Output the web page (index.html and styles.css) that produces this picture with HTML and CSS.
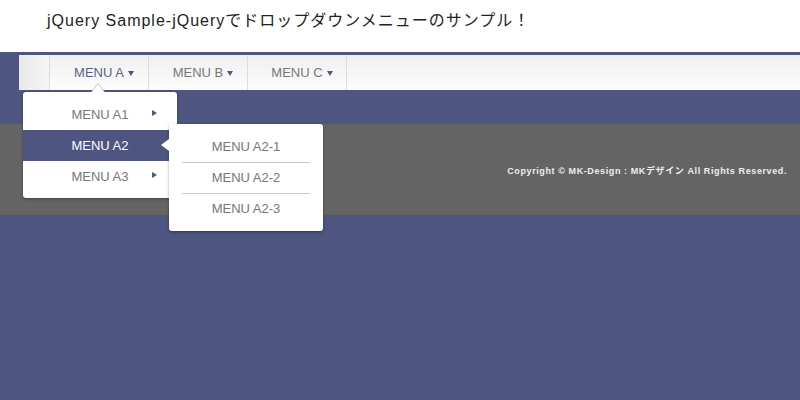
FILE: index.html
```html
<!DOCTYPE html>
<html lang="ja">
<head>
  <meta charset="UTF-8">
  <meta name="viewport" content="width=device-width, initial-scale=1.0">
  <title>jQuery Sample</title>
  <link rel="stylesheet" href="styles.css">
</head>
<body>
  <header class="header">
    <h1>jQuery Sample-jQueryでドロップダウンメニューのサンプル！</h1>
  </header>

  <nav class="nav">
    <ul class="nav-list">
      <li class="nav-blank"></li>
      <li class="nav-item active">
        <a href="#">MENU A<span class="caret"></span></a>
        <ul class="drop">
          <li class="has-sub"><a href="#">MENU A1</a></li>
          <li class="has-sub open">
            <a href="#">MENU A2</a>
            <ul class="sub">
              <li><a href="#">MENU A2-1</a></li>
              <li><a href="#">MENU A2-2</a></li>
              <li><a href="#">MENU A2-3</a></li>
            </ul>
          </li>
          <li class="has-sub"><a href="#">MENU A3</a></li>
        </ul>
      </li>
      <li class="nav-item"><a href="#">MENU B<span class="caret"></span></a></li>
      <li class="nav-item"><a href="#">MENU C<span class="caret"></span></a></li>
    </ul>
  </nav>

  <footer class="footer">
    <p>Copyright © MK-Design : MKデザイン All Rights Reserved.</p>
  </footer>
</body>
</html>
```

FILE: styles.css
```css
html, body {
  min-height: 100%;
  height: 100%;
}
body {
  margin: 0;
  background: #4d5580;
  font-family: "Liberation Sans", Arial, "Noto Sans CJK JP", sans-serif;
}
ul {
  list-style: none;
  margin: 0;
  padding: 0;
}
a {
  text-decoration: none;
}
.header {
  background: #fff;
  height: 52px;
}
.header h1 {
  margin: 0;
  padding: 9px 0 0 47px;
  font-size: 16px;
  font-weight: normal;
  letter-spacing: 1px;
  color: #222;
  line-height: 24px;
}
.nav {
  position: relative;
  z-index: 2;
  padding: 3px 0 34px 19px;
}
.nav-list {
  display: flex;
  height: 35px;
  background: linear-gradient(to bottom, #efefef, #fdfdfd);
}
.nav-blank {
  width: 30px;
  border-right: 1px solid #dcdcdc;
  background: linear-gradient(to right, #e9e9e9, #f6f6f6);
}
.nav-item {
  position: relative;
  width: 98px;
  border-right: 1px solid #dcdcdc;
  text-align: center;
}
.nav-item > a {
  display: block;
  padding-left: 10px;
  line-height: 35px;
  font-size: 13px;
  color: #777;
}
.nav-item.active > a {
  color: #5b6189;
}
.caret {
  display: inline-block;
  width: 0;
  height: 0;
  margin-left: 4px;
  border-left: 3.5px solid transparent;
  border-right: 3.5px solid transparent;
  border-top: 5px solid #4d5580;
  vertical-align: middle;
}
.drop {
  position: absolute;
  left: -27px;
  top: 37px;
  width: 154px;
  padding: 7px 0 6px;
  background: #fff;
  border-radius: 3px;
  box-shadow: 0 1px 3px rgba(0, 0, 0, 0.35);
}
.drop::before {
  content: "";
  position: absolute;
  left: 68px;
  top: -9px;
  border-left: 7px solid transparent;
  border-right: 7px solid transparent;
  border-bottom: 9px solid #bbb;
}
.drop::after {
  content: "";
  position: absolute;
  left: 69px;
  top: -8px;
  border-left: 6px solid transparent;
  border-right: 6px solid transparent;
  border-bottom: 8px solid #fff;
}
.drop > li {
  position: relative;
}
.drop > li > a {
  display: block;
  height: 31px;
  line-height: 31px;
  font-size: 13px;
  color: #777;
}
.has-sub > a::after {
  content: "";
  position: absolute;
  left: 129px;
  top: 11px;
  border-top: 3.5px solid transparent;
  border-bottom: 3.5px solid transparent;
  border-left: 5px solid #4d5580;
}
.drop > li.open > a {
  background: #4d5580;
  color: #fff;
}
.drop > li.open > a::after {
  display: none;
}
.sub {
  position: absolute;
  left: 146px;
  top: -6px;
  width: 128px;
  padding: 7px 13px;
  background: #fff;
  border-radius: 3px;
  box-shadow: 0 1px 3px rgba(0, 0, 0, 0.35);
}
.sub::before {
  content: "";
  position: absolute;
  left: -8px;
  top: 15px;
  border-top: 6px solid transparent;
  border-bottom: 6px solid transparent;
  border-right: 8px solid #fff;
}
.sub li + li {
  border-top: 1px solid #c8c8c8;
}
.sub a {
  display: block;
  line-height: 30px;
  height: 30px;
  font-size: 13px;
  color: #777;
}
.sub li:first-child a {
  height: 31px;
  line-height: 31px;
}
.footer {
  position: relative;
  z-index: 1;
  background: #646464;
  height: 91px;
  display: flex;
  align-items: center;
  justify-content: flex-end;
  padding-right: 13px;
}
.footer p {
  margin: 2px 0 0;
  font-size: 9px;
  font-weight: bold;
  letter-spacing: 0.6px;
  color: #eee;
}
```
